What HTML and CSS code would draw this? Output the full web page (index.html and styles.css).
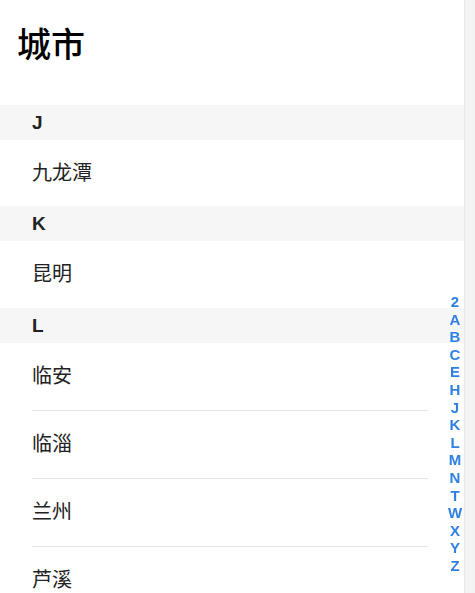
FILE: index.html
```html
<!DOCTYPE html>
<html lang="zh">
<head>
<meta charset="UTF-8">
<meta name="viewport" content="width=device-width, initial-scale=1.0">
<title>城市</title>
<link rel="stylesheet" href="styles.css">
</head>
<body>

<div class="page">
  <!-- City list -->
  <div class="city-list">
    <h1 class="title">城市</h1>

    <div class="section">
      <div class="section-header">J</div>
      <div class="city">九龙潭</div>
    </div>

    <div class="section">
      <div class="section-header">K</div>
      <div class="city">昆明</div>
    </div>

    <div class="section">
      <div class="section-header">L</div>
      <div class="city">临安</div>
      <div class="city">临淄</div>
      <div class="city">兰州</div>
      <div class="city">芦溪</div>
    </div>
  </div>

  <!-- Scroll track on the right -->
  <div class="track"></div>
</div>

<!-- Alphabet index -->
<ul class="index">
  <li>2</li>
  <li>A</li>
  <li>B</li>
  <li>C</li>
  <li>E</li>
  <li>H</li>
  <li>J</li>
  <li>K</li>
  <li>L</li>
  <li>M</li>
  <li>N</li>
  <li>T</li>
  <li>W</li>
  <li>X</li>
  <li>Y</li>
  <li>Z</li>
</ul>

</body>
</html>
```

FILE: styles.css
```css
html,
body {
  margin: 0;
  height: 100%;
  overflow: hidden;
  background-color: #fff;
  font-family: "Liberation Sans", "Noto Sans CJK SC", sans-serif;
  color: #1a1a1a;
}

.page {
  display: flex;
  height: 100%;
}

.city-list {
  flex: 1;
}

/* Scroll track */
.track {
  width: 10px;
  background-color: #f3f3f3;
  border-left: 1px solid #e6e6e6;
}

/* Page title */
.title {
  margin: 0;
  padding: 23px 0 38px 17px;
  font-size: 34px;
  line-height: 44px;
  font-weight: 500;
  color: #000;
}

/* Section letter bar */
.section-header {
  height: 35px;
  line-height: 35px;
  padding-left: 32px;
  background-color: #f6f6f6;
  font-size: 19px;
  font-weight: 600;
  color: #222;
}

.section:first-of-type .city {
  height: 66px;
  line-height: 66px;
}

/* City row */
.city {
  height: 67px;
  line-height: 67px;
  margin: 0 36px 0 32px;
  font-size: 20px;
  color: #222;
  border-bottom: 1px solid #e4e4e4;
}

.city:last-child {
  border-bottom: none;
}

/* Alphabet index */
.index {
  position: fixed;
  top: 293px;
  right: 13px;
  margin: 0;
  padding: 0;
  list-style: none;
  width: 14px;
  text-align: center;
}

.index li {
  height: 17.6px;
  line-height: 17.6px;
  font-size: 15px;
  font-weight: 700;
  color: #2f80e0;
}
```
